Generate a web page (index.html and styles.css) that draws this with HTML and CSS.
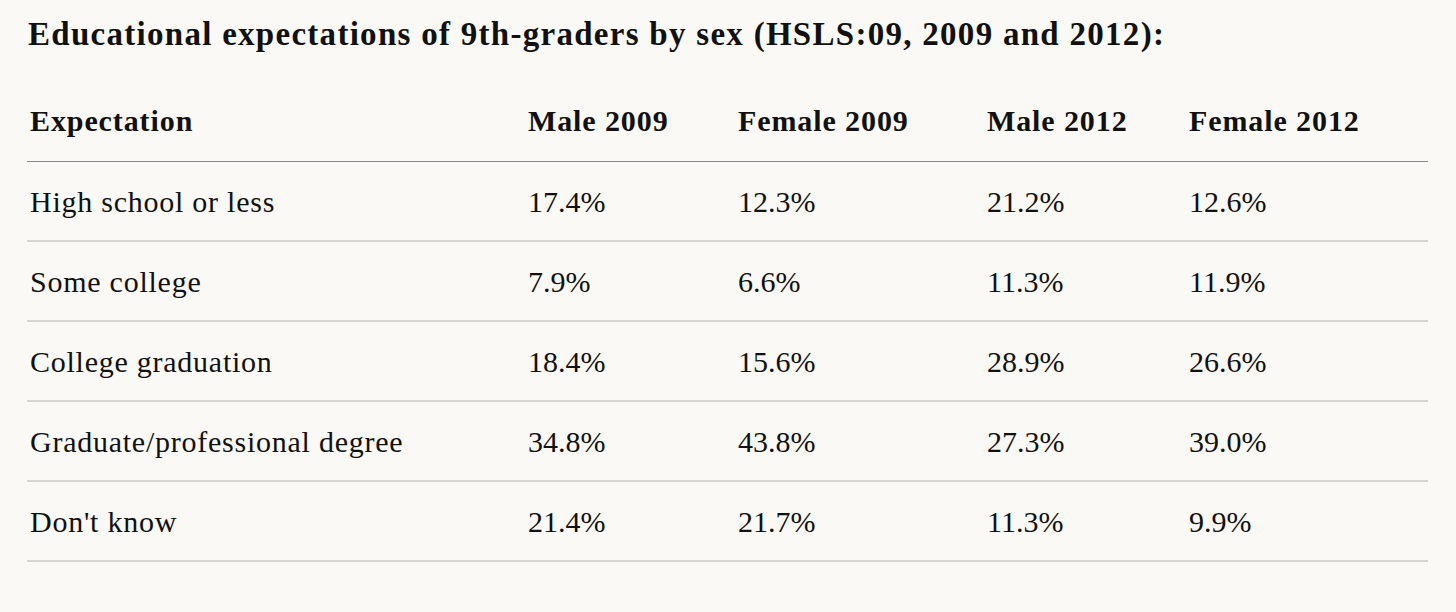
FILE: index.html
```html
<!DOCTYPE html>
<html lang="en">
<head>
<meta charset="utf-8">
<title>Educational expectations</title>
<link rel="stylesheet" href="styles.css">
</head>
<body>
<div class="page">
  <h2 class="title">Educational expectations of 9th-graders by sex (HSLS:09, 2009 and 2012):</h2>
  <table class="data">
    <colgroup>
      <col class="c1"><col class="c2"><col class="c3"><col class="c4"><col class="c5">
    </colgroup>
    <thead>
      <tr><th>Expectation</th><th>Male 2009</th><th>Female 2009</th><th>Male 2012</th><th>Female 2012</th></tr>
    </thead>
    <tbody>
      <tr><td>High school or less</td><td>17.4%</td><td>12.3%</td><td>21.2%</td><td>12.6%</td></tr>
      <tr><td>Some college</td><td>7.9%</td><td>6.6%</td><td>11.3%</td><td>11.9%</td></tr>
      <tr><td>College graduation</td><td>18.4%</td><td>15.6%</td><td>28.9%</td><td>26.6%</td></tr>
      <tr><td>Graduate/professional degree</td><td>34.8%</td><td>43.8%</td><td>27.3%</td><td>39.0%</td></tr>
      <tr><td>Don't know</td><td>21.4%</td><td>21.7%</td><td>11.3%</td><td>9.9%</td></tr>
    </tbody>
  </table>
</div>
</body>
</html>
```
FILE: styles.css
```css
html, body {
  margin: 0;
  padding: 0;
  background: #faf9f6;
}
body {
  font-family: "Liberation Serif", "Times New Roman", serif;
  color: #111;
}
.page {
  padding: 0 28px 0 27px;
}
.title {
  margin: 0;
  padding-top: 15px;
  height: 66px;
  box-sizing: border-box;
  font-size: 33px;
  font-weight: bold;
  line-height: 38px;
  letter-spacing: 1.28px;
  padding-left: 1px;
  white-space: nowrap;
}
.data {
  width: 1401px;
  border-collapse: collapse;
  table-layout: fixed;
}
.c1 { width: 498px; }
.c2 { width: 210px; }
.c3 { width: 249px; }
.c4 { width: 202px; }
.c5 { width: 242px; }
.data th, .data td {
  text-align: left;
  padding: 0 0 0 3px;
  font-size: 30px;
  vertical-align: middle;
  white-space: nowrap;
}
.data th {
  font-weight: bold;
  height: 81px;
  letter-spacing: 0.9px;
  border-bottom: 1px solid #8a8a8a;
  padding-top: 14px;
}
.data td {
  font-weight: normal;
  height: 76px;
  letter-spacing: 0.75px;
  border-bottom: 2px solid #d6d5d2;
  padding-top: 2px;
}
.data td + td {
  letter-spacing: 0;
}
```
